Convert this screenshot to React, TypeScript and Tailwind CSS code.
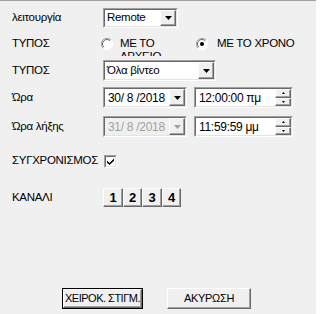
import React from 'react';

// Classic Win32 sunken edit/combo frame
function Sunken({
  className,
  disabled,
  children,
}: {
  className: string;
  disabled?: boolean;
  children: React.ReactNode;
}) {
  return (
    <div
      className={`flex shrink-0 border border-t-[#a0a0a0] border-l-[#a0a0a0] border-b-white border-r-white ${className}`}
    >
      <div
        className={`flex flex-1 items-stretch border border-t-[#696969] border-l-[#696969] border-b-[#e3e3e3] border-r-[#e3e3e3] ${
          disabled ? 'bg-[#f0f0f0]' : 'bg-white'
        }`}
      >
        {children}
      </div>
    </div>
  );
}

function Raised({ className, children }: { className: string; children?: React.ReactNode }) {
  return (
    <div
      className={`flex shrink-0 items-center justify-center whitespace-nowrap border border-t-white border-l-white border-b-[#696969] border-r-[#696969] bg-[#f0f0f0] shadow-[inset_-1px_-1px_0_#a0a0a0] ${className}`}
    >
      {children}
    </div>
  );
}

function DownArrow({ color = '#000' }: { color?: string }) {
  return (
    <svg width="7" height="4" viewBox="0 0 7 4">
      <path d="M0 0h7L3.5 4z" fill={color} />
    </svg>
  );
}

function Combo({ value, className }: { value: string; className: string }) {
  return (
    <Sunken className={className}>
      <div className="flex flex-1 items-center whitespace-nowrap pl-[2px] text-black">{value}</div>
      <Raised className="w-[16px]">
        <DownArrow />
      </Raised>
    </Sunken>
  );
}

function DateBox({ value, disabled }: { value: string; disabled?: boolean }) {
  return (
    <Sunken className="h-[21px] w-[84px]" disabled={disabled}>
      <div
        className={`flex flex-1 items-center whitespace-nowrap pl-[3px] text-[12px] ${
          disabled ? 'text-[#a0a0a0]' : 'text-black'
        }`}
      >
        {value}
      </div>
      <Raised className="w-[16px]">
        <DownArrow color={disabled ? '#a0a0a0' : '#000'} />
      </Raised>
    </Sunken>
  );
}

function TimeBox({ value }: { value: string }) {
  return (
    <Sunken className="h-[21px] w-[99px]">
      <div className="flex flex-1 items-center whitespace-nowrap pl-[3px] text-[12px] text-black">{value}</div>
      <div className="flex w-[16px] flex-col">
        <Raised className="flex-1">
          <svg width="3" height="2" viewBox="0 0 3 2">
            <path d="M1.5 0L3 2H0z" fill="#000" />
          </svg>
        </Raised>
        <Raised className="flex-1">
          <svg width="3" height="2" viewBox="0 0 3 2">
            <path d="M0 0h3L1.5 2z" fill="#000" />
          </svg>
        </Raised>
      </div>
    </Sunken>
  );
}

function Radio({ checked }: { checked?: boolean }) {
  return (
    <svg width="12" height="12" viewBox="0 0 12 12" className="shrink-0">
      <circle cx="6" cy="6" r="5.5" fill="#fff" />
      <path d="M10 2A5.5 5.5 0 0 0 2 10" fill="none" stroke="#a0a0a0" strokeWidth="1" />
      <path d="M9.2 2.8A4.5 4.5 0 0 0 2.8 9.2" fill="none" stroke="#696969" strokeWidth="1" />
      <path d="M2 10A5.5 5.5 0 0 0 10 2" fill="none" stroke="#fff" strokeWidth="1" />
      {checked && <circle cx="6" cy="6" r="2" fill="#000" />}
    </svg>
  );
}

function Label({ children }: { children: React.ReactNode }) {
  return <div className="w-[91px] shrink-0 whitespace-nowrap text-black">{children}</div>;
}

export default function App() {
  return (
    <div className="flex h-[314px] w-[316px] flex-col overflow-hidden border-t border-[#a0a0a0] bg-[#f0f0f0] pl-[12px] font-['Liberation_Sans',Arial,sans-serif] text-[11.5px] leading-none tracking-[-0.3px]">
      {/* λειτουργία */}
      <div className="mt-[7px] flex h-[20px] items-center">
        <Label>λειτουργία</Label>
        <Combo value="Remote" className="h-[20px] w-[75px]" />
      </div>

      {/* ΤΥΠΟΣ radios */}
      <div className="mt-[3px] flex h-[25px] items-center">
        <Label>ΤΥΠΟΣ</Label>
        <div className="-ml-[2px] flex h-[25px] items-center">
          <Radio />
          <div className="ml-[7px] h-[25px] w-[45px] overflow-hidden pt-[6px] leading-[13px]">
            ΜΕ ΤΟ ΑΡΧΕΙΟ
          </div>
        </div>
        <div className="ml-[31px] flex items-center">
          <Radio checked />
          <div className="ml-[9px] whitespace-nowrap">ΜΕ ΤΟ ΧΡΟΝΟ</div>
        </div>
      </div>

      {/* ΤΥΠΟΣ combo */}
      <div className="mt-[4px] flex h-[21px] items-center">
        <Label>ΤΥΠΟΣ</Label>
        <Combo value="Όλα βίντεο" className="h-[21px] w-[113px]" />
      </div>

      {/* Ώρα */}
      <div className="mt-[6px] flex h-[21px] items-center">
        <Label>Ώρα</Label>
        <DateBox value="30/ 8 /2018" />
        <div className="ml-[7px]">
          <TimeBox value="12:00:00 πμ" />
        </div>
      </div>

      {/* Ώρα λήξης */}
      <div className="mt-[8px] flex h-[21px] items-center">
        <Label>Ώρα λήξης</Label>
        <DateBox value="31/ 8 /2018" disabled />
        <div className="ml-[7px]">
          <TimeBox value="11:59:59 μμ" />
        </div>
      </div>

      {/* ΣΥΓΧΡΟΝΙΣΜΟΣ */}
      <div className="mt-[17px] flex h-[14px] items-center">
        <Label>ΣΥΓΧΡΟΝΙΣΜΟΣ</Label>
        <div className="ml-[1px] flex h-[13px] w-[13px] border border-t-[#a0a0a0] border-l-[#a0a0a0] border-b-white border-r-white">
          <div className="flex flex-1 items-center justify-center border border-t-[#696969] border-l-[#696969] border-b-[#e3e3e3] border-r-[#e3e3e3] bg-white">
            <svg width="8" height="7" viewBox="0 0 8 7">
              <path d="M0 2.5l2.5 2.5L7 0.5V2.8L2.5 7L0 4.8z" fill="#000" />
            </svg>
          </div>
        </div>
      </div>

      {/* ΚΑΝΑΛΙ */}
      <div className="mt-[20px] flex h-[19px] items-center">
        <Label>ΚΑΝΑΛΙ</Label>
        <Raised className="h-[19px] w-[20px] text-[13px] font-bold">1</Raised>
        <Raised className="h-[19px] w-[19px] text-[13px] font-bold">2</Raised>
        <Raised className="h-[19px] w-[20px] text-[13px] font-bold">3</Raised>
        <Raised className="h-[19px] w-[19px] text-[13px] font-bold">4</Raised>
      </div>

      {/* buttons */}
      <div className="mt-[81px] flex h-[21px] items-center pl-[50px]">
        <div className="flex h-[21px] w-[81px] shrink-0 border border-black">
          <Raised className="flex-1 text-[11px] tracking-[-0.5px]">ΧΕΙΡΟΚ. ΣΤΙΓΜ.</Raised>
        </div>
        <Raised className="ml-[24px] h-[21px] w-[84px] text-[11px] tracking-[-0.3px]">ΑΚΥΡΩΣΗ</Raised>
      </div>
    </div>
  );
}
